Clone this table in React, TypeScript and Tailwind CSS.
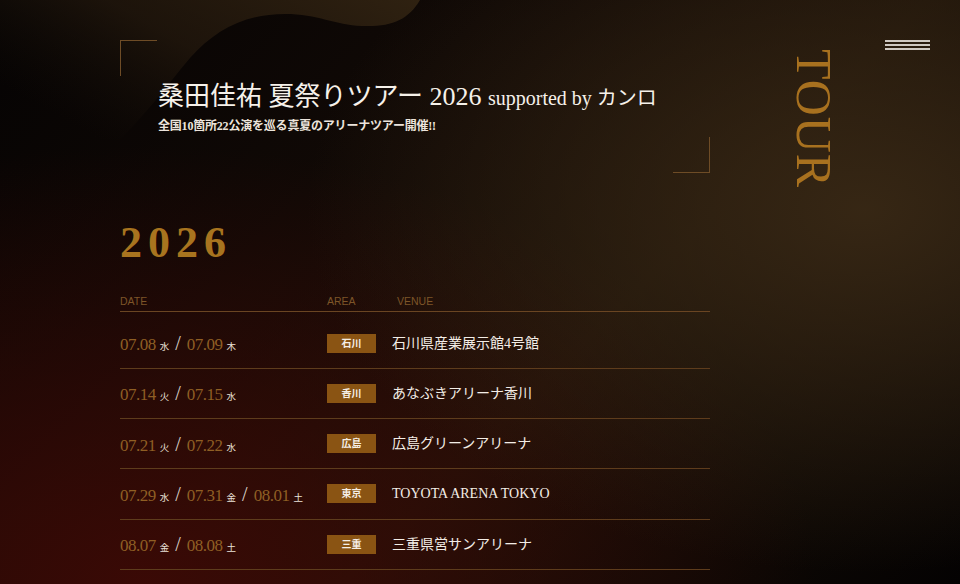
import React from "react";

type DateItem = [string, string];
type Row = { dates: DateItem[]; area: string; venue: string };

const rows: Row[] = [
  { dates: [["07.08", "水"], ["07.09", "木"]], area: "石川", venue: "石川県産業展示館4号館" },
  { dates: [["07.14", "火"], ["07.15", "水"]], area: "香川", venue: "あなぶきアリーナ香川" },
  { dates: [["07.21", "火"], ["07.22", "水"]], area: "広島", venue: "広島グリーンアリーナ" },
  { dates: [["07.29", "水"], ["07.31", "金"], ["08.01", "土"]], area: "東京", venue: "TOYOTA ARENA TOKYO" },
  { dates: [["08.07", "金"], ["08.08", "土"]], area: "三重", venue: "三重県営サンアリーナ" },
];

const serif = "font-['Liberation_Serif','Noto_Sans_CJK_JP',serif]";

export default function App() {
  return (
    <div className="relative w-[960px] h-[584px] overflow-hidden bg-[#070404] bg-[radial-gradient(58%_62%_at_90%_36%,rgba(56,40,21,0.95)_0%,rgba(56,40,21,0)_100%),radial-gradient(70%_75%_at_15%_100%,rgba(62,9,5,0.9)_0%,rgba(62,9,5,0)_100%),linear-gradient(135deg,#050303_0%,#120a06_38%,#1b1108_60%,#040202_100%)]">
      {/* wave decoration */}
      <svg className="absolute left-0 top-0" width="960" height="140" viewBox="0 0 960 140">
        <defs>
          <linearGradient id="wv" x1="1" y1="0" x2="0" y2="0.6">
            <stop offset="0" stopColor="#352613" stopOpacity="0.85" />
            <stop offset="0.55" stopColor="#2a1d0f" stopOpacity="0.6" />
            <stop offset="1" stopColor="#1a120a" stopOpacity="0" />
          </linearGradient>
        </defs>
        <path
          d="M 60 0 L 420 0 C 408 20 392 27 362 26 C 335 25 318 14 285 14 C 245 14 215 30 190 58 C 165 88 145 115 120 140 L 0 140 L 0 0 Z"
          fill="url(#wv)"
        />
      </svg>

      {/* hamburger */}
      <div className="absolute left-[885px] top-[40px] flex w-[45px] flex-col gap-[2.5px]">
        <span className="block h-[1.5px] w-full bg-[#cfc9c2]" />
        <span className="block h-[1.5px] w-full bg-[#cfc9c2]" />
        <span className="block h-[1.5px] w-full bg-[#cfc9c2]" />
      </div>

      {/* vertical TOUR */}
      <div className="absolute left-[789px] top-[49px] font-['Liberation_Serif',serif] text-[50px] leading-none tracking-[1px] text-[#a8711f] [writing-mode:vertical-rl]">
        TOUR
      </div>

      <div className="relative z-10 ml-[120px] w-[590px] pt-[40px]">
        {/* header box */}
        <div className="relative h-[133px]">
          <span className="absolute left-0 top-0 h-[36px] w-px bg-[#6e4c26]" />
          <span className="absolute left-0 top-0 h-px w-[37px] bg-[#6e4c26]" />
          <span className="absolute bottom-0 right-0 h-[36px] w-px bg-[#6e4c26]" />
          <span className="absolute bottom-0 right-0 h-px w-[37px] bg-[#6e4c26]" />
          <div className="pl-[38px] pt-[40px]">
            <h1 className={`${serif} whitespace-nowrap text-[26px] leading-[1.3] text-[#f6f1ea]`}>
              桑田佳祐 夏祭りツアー 2026 <span className="text-[20px]">supported by カンロ</span>
            </h1>
            <p className={`${serif} mt-[4px] whitespace-nowrap text-[12px] font-bold leading-[1.4] tracking-[-0.2px] text-[#ece4dc]`}>
              全国10箇所22公演を巡る真夏のアリーナツアー開催!!
            </p>
          </div>
        </div>

        {/* year */}
        <div className="mt-[48px] font-['Liberation_Serif',serif] text-[44px] font-bold leading-none tracking-[6px] text-[#a8741f]">
          2026
        </div>

        {/* table header */}
        <div className="mt-[31px] grid grid-cols-[207px_70px_1fr] border-b border-[#6a4522] pb-[4px] font-['Liberation_Sans',sans-serif] text-[10.5px] leading-none text-[#7d5528]">
          <span>DATE</span>
          <span>AREA</span>
          <span>VENUE</span>
        </div>

        <div className="pt-[7px]">
          {rows.map((r, i) => (
            <div
              key={i}
              className="grid h-[50.25px] grid-cols-[207px_65px_1fr] items-center border-b border-[#5e3c1c]"
            >
              <div className={`${serif} flex items-baseline whitespace-nowrap`}>
                {r.dates.map((d, j) => (
                  <React.Fragment key={j}>
                    {j > 0 && (
                      <span className="mx-[6px] text-[20px] font-light leading-none text-[#d9d1c8]">/</span>
                    )}
                    <span className="text-[17px] leading-none tracking-[-0.5px] text-[#8f5f24]">{d[0]}</span>
                    <span className="ml-[4px] text-[9.5px] leading-none text-[#ebe3da]">{d[1]}</span>
                  </React.Fragment>
                ))}
              </div>
              <div>
                <span className={`${serif} flex h-[19px] w-[49px] items-center justify-center bg-[#8a5413] text-[10px] font-bold text-[#f5eee6]`}>
                  {r.area}
                </span>
              </div>
              <div className={`${serif} whitespace-nowrap text-[14px] text-[#f3ede6]`}>{r.venue}</div>
            </div>
          ))}
        </div>
      </div>
    </div>
  );
}
